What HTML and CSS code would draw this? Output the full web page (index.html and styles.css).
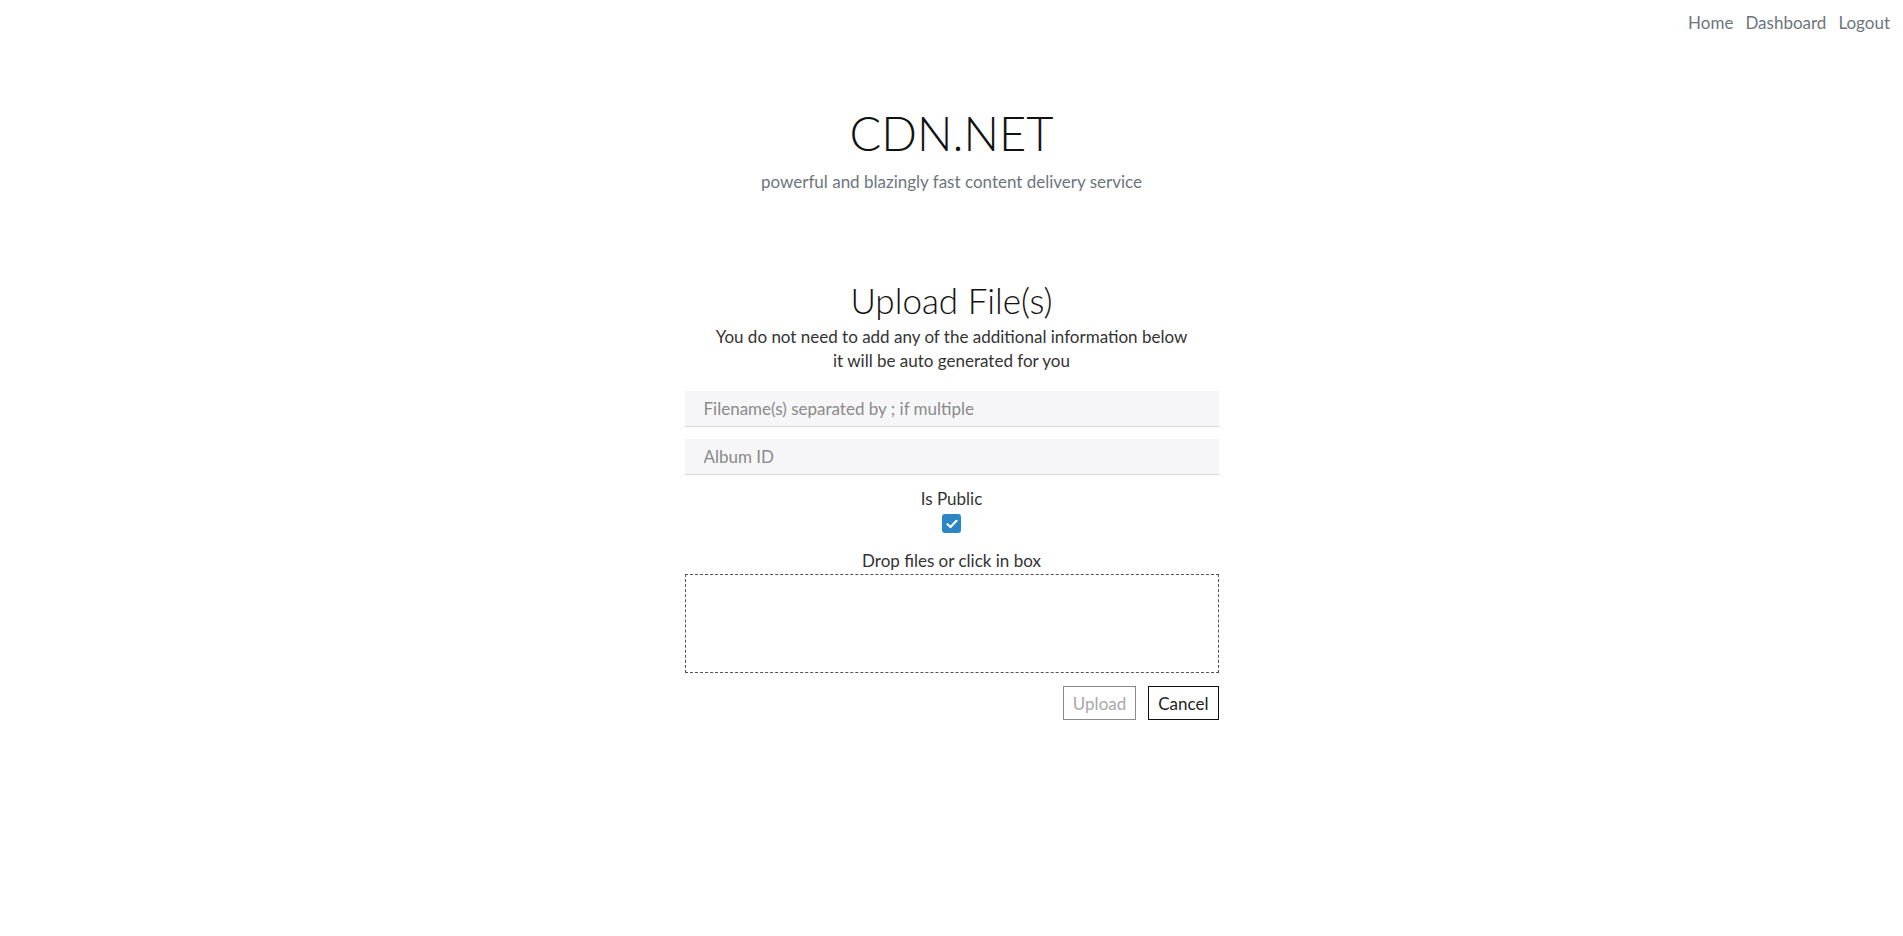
FILE: index.html
```html
<!DOCTYPE html>
<html lang="en">
<head>
    <meta charset="UTF-8">
    <meta name="viewport" content="width=device-width, initial-scale=1.0">
    <title>CDN.NET - Upload</title>
    <link rel="stylesheet" href="styles.css">
</head>
<body>

    <nav class="nav">
        <a href="#">Home</a>
        <a href="#">Dashboard</a>
        <a href="#">Logout</a>
    </nav>

    <header class="hero">
        <h1>CDN.NET</h1>
        <p>powerful and blazingly fast content delivery service</p>
    </header>

    <main class="upload">
        <h2>Upload File(s)</h2>
        <p class="info">You do not need to add any of the additional information below<br>it will be auto generated for you</p>

        <form class="upload-form">
            <input type="text" placeholder="Filename(s) separated by ; if multiple">
            <input type="text" placeholder="Album ID">

            <label class="field-label">Is Public</label>
            <span class="check">
                <svg width="12" height="10" viewBox="0 0 12 10">
                    <path d="M1.5 5.2 L4.5 8 L10.5 1.8" fill="none" stroke="#fff" stroke-width="2.2" stroke-linecap="round" stroke-linejoin="round"/>
                </svg>
            </span>

            <label class="field-label drop-label">Drop files or click in box</label>
            <div class="dropzone"></div>

            <div class="actions">
                <button type="button" class="btn btn-disabled">Upload</button>
                <button type="button" class="btn">Cancel</button>
            </div>
        </form>
    </main>

</body>
</html>
```

FILE: styles.css
```css
body {
    margin: 0;
    font-family: Lato, "Open Sans", sans-serif;
    color: #212529;
    background-color: #fff;
}


.nav {
    display: flex;
    justify-content: flex-end;
    gap: 12px;
    padding: 11px 13px 0;
    font-size: 17px;
    line-height: 24px;
}

.nav a {
    color: #6c757d;
    text-decoration: none;
}


.hero {
    text-align: center;
    margin-top: 68px;
}

.hero h1 {
    margin: 0;
    font-size: 47px;
    line-height: 60px;
    font-weight: 300;
    color: #111;
}

.hero p {
    margin: 7px 0 0;
    font-size: 17px;
    line-height: 24px;
    color: #6c757d;
}


.upload {
    width: 534px;
    margin: 86px auto 0;
    text-align: center;
}

.upload h2 {
    margin: 0;
    font-size: 35px;
    line-height: 40px;
    font-weight: 300;
    color: #111;
}

.info {
    margin: 5px 0 0;
    font-size: 17px;
    line-height: 24px;
    color: #333;
}

.upload-form {
    display: flex;
    flex-direction: column;
    align-items: center;
    margin-top: 18px;
}

.upload-form input {
    box-sizing: border-box;
    width: 100%;
    height: 36px;
    margin-bottom: 12px;
    padding: 0 19px;
    border: none;
    border-bottom: 1px solid #d9d9d9;
    background-color: #f6f6f8;
    font-family: inherit;
    font-size: 17px;
    color: #333;
    outline: none;
}

.upload-form input::placeholder {
    color: #8a8a8a;
}

.field-label {
    font-size: 17px;
    line-height: 24px;
    color: #333;
}

.check {
    display: flex;
    justify-content: center;
    align-items: center;
    width: 19px;
    height: 19px;
    margin-top: 3px;
    border-radius: 3px;
    background-color: #2b86c5;
}

.drop-label {
    margin-top: 16px;
}

.dropzone {
    box-sizing: border-box;
    width: 100%;
    height: 99px;
    margin-top: 1px;
    border: 1px dashed #555;
}

.actions {
    display: flex;
    justify-content: flex-end;
    gap: 12px;
    width: 100%;
    margin-top: 13px;
}

.btn {
    height: 34px;
    padding: 0 9px;
    border: 1px solid #111;
    background: #fff;
    font-family: inherit;
    font-size: 17px;
    color: #222;
    cursor: pointer;
}

.btn-disabled {
    border-color: #8a8a8a;
    color: #a8a8a8;
    cursor: default;
}
```
